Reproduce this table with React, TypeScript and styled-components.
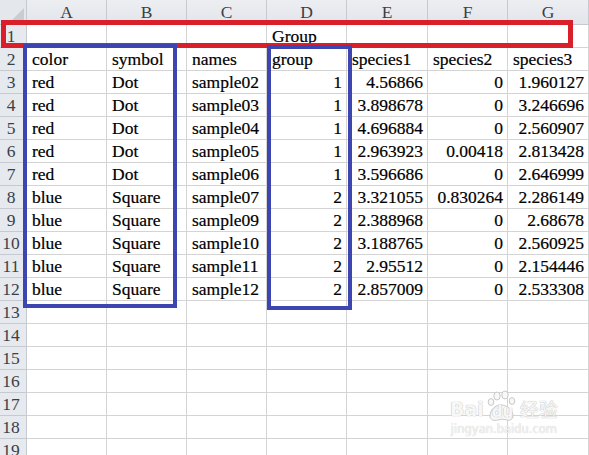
import React from "react";
import styled, { createGlobalStyle } from "styled-components";

const Global = createGlobalStyle`
  html, body { margin: 0; padding: 0; background: #fff; overflow: hidden; }
  * { box-sizing: border-box; }
`;

const Sheet = styled.div`
  position: relative;
  width: 589px;
  height: 455px;
  overflow: hidden;
  font-family: "Liberation Serif", "Times New Roman", serif;
  font-size: 17.5px;
  color: #000;
`;

const Grid = styled.div`
  display: grid;
  grid-template-columns: 27px 80px 80px 80px 80px 81px 80px 81px;
  grid-template-rows: 25px repeat(19, 23px);
`;

const Corner = styled.div`
  position: relative;
  background: #e4e7ec;
  border-right: 1px solid #c6cad0;
  border-bottom: 1px solid #c6cad0;
  &::after {
    content: "";
    position: absolute;
    right: 2px;
    bottom: 2px;
    border-left: 14px solid transparent;
    border-bottom: 14px solid #c9ccd1;
  }
`;

const ColHead = styled.div`
  background: linear-gradient(#eceef2, #e2e5ea);
  border-right: 1px solid #c6cad0;
  border-bottom: 1px solid #c6cad0;
  display: flex;
  align-items: center;
  justify-content: center;
  color: #3b3f46;
  font-size: 17.5px;
  padding-top: 1px;
`;

const RowHead = styled.div`
  background: #e6e9ee;
  border-right: 1px solid #c6cad0;
  border-bottom: 1px solid #c6cad0;
  display: flex;
  align-items: center;
  justify-content: center;
  padding: 1px 4px 0 0;
  color: #3b3f46;
  font-size: 17.5px;
`;

const Cell = styled.div`
  font-family: "Liberation Serif", "Times New Roman", serif;
  font-size: 17.5px;
  -webkit-text-stroke: 0.2px #000;
  border-right: 1px solid #d4d4d4;
  border-bottom: 1px solid #d4d4d4;
  display: flex;
  align-items: center;
  justify-content: flex-start;
  padding: 1px 0 0 5px;
  white-space: nowrap;
`;

const NumCell = styled(Cell)`
  justify-content: flex-end;
  padding: 1px 4px 0 0;
`;

const Frame = styled.div<{ $color: string; $w: number }>`
  position: absolute;
  border: ${(p) => p.$w}px solid ${(p) => p.$color};
  pointer-events: none;
`;

const Watermark = styled.div`
  position: absolute;
  left: 450px;
  top: 390px;
  display: flex;
  flex-direction: column;
  align-items: center;
  color: #f7f7f7;
  font-family: "DejaVu Sans", "Noto Sans CJK SC", sans-serif;
  pointer-events: none;
`;

const WmTop = styled.div`
  display: flex;
  align-items: flex-end;
  font-size: 19px;
  font-weight: bold;
  line-height: 22px;
  text-shadow: 0 0 1px #c0c0c0, 0 0 1px #c0c0c0;
`;

const PawBox = styled.span`
  position: relative;
  display: inline-block;
  width: 34px;
  height: 32px;
  margin: 0 1px -2px;
`;

const PawText = styled.span`
  position: absolute;
  left: 7px;
  bottom: 2px;
  font-size: 15px;
  line-height: 16px;
`;

const WmSub = styled.div`
  font-size: 11.5px;
  line-height: 14px;
  margin-top: 2px;
  color: #f2f2f2;
  text-shadow: 0 0 1px #c4c4c4;
`;

const WmCjk = styled.span`
  font-family: "Noto Sans CJK SC", sans-serif;
  font-size: 19px;
  font-weight: normal;
`;

const cols = ["A", "B", "C", "D", "E", "F", "G"];

type Row = (string | null)[];

const data: Row[] = [
  [null, null, null, "Group", null, null, null],
  ["color", "symbol", "names", "group", "species1", "species2", "species3"],
  ["red", "Dot", "sample02", "1", "4.56866", "0", "1.960127"],
  ["red", "Dot", "sample03", "1", "3.898678", "0", "3.246696"],
  ["red", "Dot", "sample04", "1", "4.696884", "0", "2.560907"],
  ["red", "Dot", "sample05", "1", "2.963923", "0.00418", "2.813428"],
  ["red", "Dot", "sample06", "1", "3.596686", "0", "2.646999"],
  ["blue", "Square", "sample07", "2", "3.321055", "0.830264", "2.286149"],
  ["blue", "Square", "sample09", "2", "2.388968", "0", "2.68678"],
  ["blue", "Square", "sample10", "2", "3.188765", "0", "2.560925"],
  ["blue", "Square", "sample11", "2", "2.95512", "0", "2.154446"],
  ["blue", "Square", "sample12", "2", "2.857009", "0", "2.533308"],
];

const isNum = (v: string | null) => v !== null && /^[0-9.]+$/.test(v);

const Paw = () => (
  <PawBox>
    <svg width="34" height="32" viewBox="0 0 34 32">
      <g fill="#f8f8f8" stroke="#c8c8c8" strokeWidth="1">
        <ellipse cx="12" cy="6" rx="3.2" ry="4" />
        <ellipse cx="20" cy="5" rx="3.2" ry="4" />
        <ellipse cx="27" cy="11" rx="2.8" ry="3.4" />
        <ellipse cx="6" cy="12" rx="2.8" ry="3.4" />
        <path d="M5 26c0-6 5-11 11-11s12 5 12 11c0 3-3 5-6 4-3-1-6-1-9 0-4 1-8 0-8-4z" />
      </g>
    </svg>
    <PawText>du</PawText>
  </PawBox>
);

export default function App() {
  const rows: React.ReactNode[] = [];
  for (let r = 1; r <= 19; r++) {
    const row = data[r - 1];
    rows.push(<RowHead key={`h${r}`}>{r}</RowHead>);
    for (let c = 0; c < 7; c++) {
      const v = row ? row[c] : null;
      const key = `c${r}-${c}`;
      rows.push(isNum(v) ? <NumCell key={key}>{v}</NumCell> : <Cell key={key}>{v ?? ""}</Cell>);
    }
  }
  return (
    <>
      <Global />
      <Sheet>
        <Grid>
          <Corner />
          {cols.map((c) => (
            <ColHead key={c}>{c}</ColHead>
          ))}
          {rows}
        </Grid>
        <Frame $color="#d9202a" $w={5} style={{ left: 1, top: 20, width: 572, height: 28 }} />
        <Frame $color="#3d45b0" $w={4} style={{ left: 23, top: 44, width: 154, height: 264 }} />
        <Frame $color="#3d45b0" $w={4} style={{ left: 267, top: 45, width: 85, height: 265 }} />
        <Watermark>
          <WmTop>
            Bai
            <Paw />
            <WmCjk>经验</WmCjk>
          </WmTop>
          <WmSub>jingyan.baidu.com</WmSub>
        </Watermark>
      </Sheet>
    </>
  );
}
